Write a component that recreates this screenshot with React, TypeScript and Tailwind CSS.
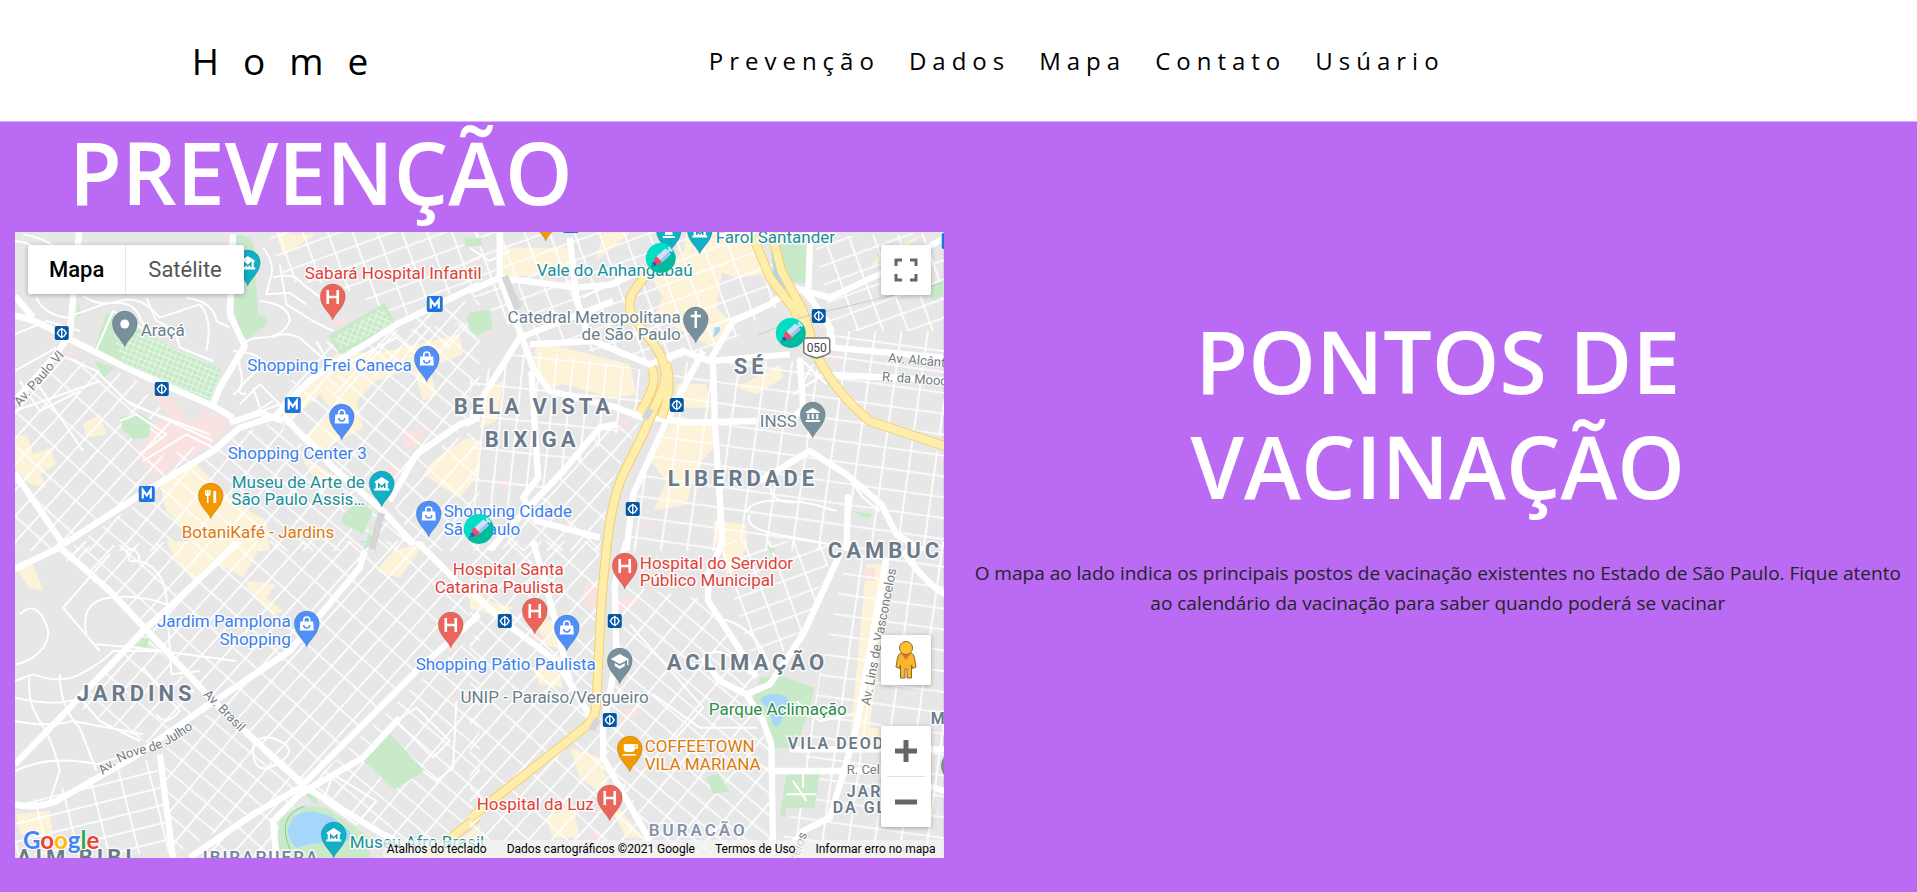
import React from "react";

type Kind = "hospital" | "shop" | "museum" | "food" | "cafe" | "dot" | "church" | "bank" | "school" | "statue";

const pinColors: Record<Kind, string> = {
  hospital: "#ec655b",
  shop: "#4f8ff7",
  museum: "#12b0c6",
  food: "#f29900",
  cafe: "#f29900",
  dot: "#78909c",
  church: "#78909c",
  bank: "#78909c",
  school: "#78909c",
  statue: "#12b0c6",
};

function Glyph({ kind }: { kind: Kind }) {
  switch (kind) {
    case "hospital":
      return <path d="M-5-7V7M5-7V7M-5 0H5" fill="none" stroke="#fff" strokeWidth="2.6" />;
    case "shop":
      return (
        <g>
          <path d="M-3-2V-4a3 3 0 0 1 6 0V-2" fill="none" stroke="#fff" strokeWidth="1.6" />
          <path d="M-6.500-2.500H6.500L7 6.500H-7Z" fill="#fff" />
          <path d="M-3 1a3 3 0 0 0 6 0" fill="none" stroke="#4f8ff7" strokeWidth="1.500" />
        </g>
      );
    case "museum":
      return (
        <g>
          <path d="M-7-2.500L0-7L7-2.500V-1H-7ZM-6-1H6V5H-6ZM-7.500 4.500H7.500V6.500H-7.500Z" fill="#fff" />
          <path d="M-3 4V0L0 3L3 0V4" fill="none" stroke="#12a0b4" strokeWidth="1.500" />
        </g>
      );
    case "food":
      return (
        <g fill="none" stroke="#fff">
          <path d="M-5-6V-2.500Q-5-.5-3-.5Q-1-.5-1-2.500V-6M-3-6V7" strokeWidth="1.600" />
          <path d="M4-5V7" strokeWidth="2.800" />
        </g>
      );
    case "cafe":
      return (
        <g>
          <path d="M-6-5H5V0Q5 3 2 3H-3Q-6 3-6 0ZM-7 5H6V6.800H-7Z" fill="#fff" />
          <path d="M5-4H7.500V-1H5" fill="none" stroke="#fff" strokeWidth="1.300" />
        </g>
      );
    case "dot":
      return <circle r="4.500" fill="#fff" />;
    case "church":
      return <path d="M0-9V8M-5-4H5" stroke="#fff" strokeWidth="2.400" />;
    case "bank":
      return <path d="M-7-3L0-7L7-3V-2H-7ZM-5.500-1H-3.500V4H-5.500ZM-1-1H1V4H-1ZM3.500-1H5.500V4H3.500ZM-7 5H7V7H-7Z" fill="#fff" />;
    case "school":
      return (
        <g fill="#fff">
          <path d="M-9-2L0-7L9-2L0 3ZM-5 2L0 5L5 2V5L0 8L-5 5Z" />
          <path d="M8-2V4" stroke="#fff" strokeWidth="1.300" />
        </g>
      );
    case "statue":
      return <path d="M-2-7H2L4 4H-4ZM-6 5H6V7H-6Z" fill="#fff" />;
  }
}

function Pin({ x, y, kind }: { x: number; y: number; kind: Kind }) {
  return (
    <g transform={`translate(${x} ${y})`}>
      <path
        d="M0 0C-1.600-6-12.500-13-12.500-23.500A12.500 12.500 0 0 1 12.500-23.500C12.500-13 1.600-6 0 0Z"
        fill={pinColors[kind]}
        stroke="#00000022"
        strokeWidth="1"
      />
      <g transform="translate(0 -23)">
        <Glyph kind={kind} />
      </g>
    </g>
  );
}

const pins: [number, number, Kind][] = [
  [248, 285, "museum"],
  [125, 346, "dot"],
  [333, 319, "hospital"],
  [427, 381, "shop"],
  [342, 439, "shop"],
  [382, 506, "museum"],
  [211, 518, "food"],
  [429, 536, "shop"],
  [696, 342, "church"],
  [813, 437, "bank"],
  [700, 253, "museum"],
  [669, 253, "statue"],
  [546, 240, "food"],
  [307, 646, "shop"],
  [451, 647, "hospital"],
  [535, 633, "hospital"],
  [567, 650, "shop"],
  [620, 683, "school"],
  [625, 588, "hospital"],
  [630, 771, "cafe"],
  [610, 820, "hospital"],
  [334, 857, "museum"],
  [954, 788, "dot"],
];

type Place = [string, number, number, string, ("start" | "end")?];
const RED = "#df4238";
const BLUE = "#3b80ef";
const TEAL = "#198f9b";
const ORANGE = "#dd7a0c";
const SLATE = "#687f8c";

const places: Place[] = [
  ["Sabará Hospital Infantil", 305, 278, RED],
  ["Araçá", 141, 335, SLATE],
  ["Shopping Frei Caneca", 412, 370, BLUE, "end"],
  ["Shopping Center 3", 228, 458, BLUE],
  ["Museu de Arte de", 365, 487, TEAL, "end"],
  ["São Paulo Assis…", 365, 504, TEAL, "end"],
  ["BotaniKafé - Jardins", 182, 537, ORANGE],
  ["Shopping Cidade", 444, 516, BLUE],
  ["São Paulo", 444, 534, BLUE],
  ["Vale do Anhangabaú", 537, 275, TEAL],
  ["Farol Santander", 716, 242, TEAL],
  ["Catedral Metropolitana", 681, 322, SLATE, "end"],
  ["de São Paulo", 681, 339, SLATE, "end"],
  ["INSS", 797, 426, SLATE, "end"],
  ["Jardim Pamplona", 291, 626, BLUE, "end"],
  ["Shopping", 291, 644, BLUE, "end"],
  ["Hospital Santa", 564, 574, RED, "end"],
  ["Catarina Paulista", 564, 592, RED, "end"],
  ["Shopping Pátio Paulista", 596, 669, BLUE, "end"],
  ["UNIP - Paraíso/Vergueiro", 649, 702, SLATE, "end"],
  ["Hospital do Servidor", 640, 568, RED],
  ["Público Municipal", 640, 585, RED],
  ["Parque Aclimação", 709, 714, "#2c8c4b"],
  ["COFFEETOWN", 645, 751, ORANGE],
  ["VILA MARIANA", 645, 769, ORANGE],
  ["Hospital da Luz", 594, 809, RED, "end"],
  ["Museu Afro Brasil", 350, 847, TEAL],
];

const districts: [string, number, number][] = [
  ["BELA VISTA", 454, 413],
  ["BIXIGA", 485, 446],
  ["SÉ", 734, 373],
  ["LIBERDADE", 668, 485],
  ["CAMBUC", 828, 557],
  ["ACLIMAÇÃO", 667, 669],
  ["JARDINS", 77, 700],
];

const smallDistricts: [string, number, number][] = [
  ["VILA DEOD", 788, 748],
  ["JAR", 847, 796],
  ["DA GL", 833, 812],
  ["M", 931, 723],
];

const metros: [number, number][] = [
  [435, 303],
  [293, 404],
  [147, 493],
  [571, 224],
  [950, 240],
];
const stations: [number, number][] = [
  [62, 332],
  [162, 388],
  [677, 404],
  [819, 315],
  [633, 508],
  [505, 620],
  [615, 620],
  [610, 719],
];
const clinics: [number, number][] = [
  [661, 257],
  [791, 332],
  [479, 528],
];

/* Street geometry is kept in four tiles, drawn at a third of its own scale. */
type Tile = {
  x: number;
  y: number;
  grids: [string, string][];
  shops: string[];
  green: string[];
  pink: string[];
  water: string[];
  streets: string[];
  avenues: string[];
  highways: string[];
};

const tiles: Tile[] = [
  {
    x: 0,
    y: 220,
    grids: [
      ["url(#gridA)", "M45 520L180 400L400 470L520 600L430 720L680 650L190 960L45 740Z"],
      ["url(#gridB)", "M860 590L1180 330L1440 300V600L1250 700L1130 850Z"],
      ["url(#gridB)", "M830 600L1260 990H200L720 640Z"],
      ["url(#gridC)", "M800 33H1440V190L1200 290L1010 190L860 180Z"],
      ["url(#gridA)", "M45 770L190 990H45Z"],
      ["url(#gridA)", "M1180 850L1250 710L1440 620V990H1260Z"],
      ["url(#gridA)", "M990 350L1440 230V340L900 560L840 520Z"],
    ],
    shops: [
      "M45 650L80 640L100 700L150 680L170 730L120 760L140 800L90 790L45 740Z",
      "M480 790L590 730L700 840L800 900L810 990H600L560 930L500 870Z",
      "M850 540L1010 400L1160 390L1380 340L1390 400L1290 440L1310 520L1270 540L1240 440L1130 480L1070 540L1090 620L960 690L910 650L1000 570L960 520L850 620Z",
      "M830 40H950L900 70L850 105Z",
      "M1300 720L1400 650L1440 660V760L1380 830L1270 760Z",
      "M250 610L300 580L320 640L260 650Z",
      "M900 700L1030 780L960 800Z",
    ],
    green: [
      "M320 275L480 360L665 445L630 540L500 490L370 430L285 385Z",
      "M700 45Q770 30 765 110L775 280Q830 300 780 325L750 355L725 345L705 270Z",
      "M1155 245L1190 315L1020 400L985 345Z",
      "M360 590L420 575L455 600L445 650L400 655L370 630Z",
      "M285 420L345 440L310 470Z",
      "M1030 880L1080 840L1120 870L1090 940L1025 905Z",
      "M1400 290L1440 270V345L1410 325Z",
      "M1395 50H1440V75H1395Z",
      "M235 240L245 280L230 290Z",
      "M1090 985L1110 930L1130 985Z",
    ],
    pink: [
      "M445 500L545 560L560 610L620 570L690 600L640 670L540 720L470 770L410 690L440 660L470 600L520 600Z",
      "M1000 300L1045 285L1040 310L1010 318Z",
      "M1210 630L1280 620L1250 680L1215 680Z",
      "M195 400L225 380L235 395L205 412Z",
      "M1160 740L1185 720L1195 750L1170 765Z",
    ],
    water: [],
    streets: [
      "M45 60Q130 70 140 130T90 220",
      "M70 40Q180 60 200 130L230 200",
      "M110 230Q130 280 200 290L310 250Q400 230 420 290T560 340",
      "M250 225Q300 260 360 240T480 290L600 250Q640 290 620 390",
      "M440 230L470 300Q530 320 540 380L640 420",
      "M560 230Q640 240 650 300L690 320",
      "M780 240Q870 250 870 300Q850 350 780 350T720 440Q740 500 700 520",
      "M820 350Q850 330 900 350L990 430L940 470",
      "M820 170Q880 150 910 190L990 250",
      "M790 80Q830 130 810 180L800 220L870 215L920 250",
      "M200 410L290 450L380 540L640 660",
      "M390 550L630 640",
      "M360 600L410 580L500 640L420 700",
      "M430 720L560 640L660 690",
      "M720 550L780 490L840 550L760 580",
      "M760 500L780 560M740 590L820 540",
      "M840 130L860 250L940 300L1000 330",
      "M45 340L140 300L240 330",
      "M290 385L340 270L440 330",
      "M700 390Q830 400 760 460T740 520",
      "M950 360L1000 450L1190 350",
      "M45 450L170 380M60 480L120 570L240 510M100 470L250 690M45 570L300 480",
    ],
    avenues: [
      "M45 285Q100 290 200 350L400 450L640 555L700 590",
      "M190 970L440 810L640 690L720 620L830 585L860 545L940 470L1190 310L1440 190",
      "M850 585L1000 740L1150 870L1260 990",
      "M45 755L190 970",
      "M238 33L210 340L170 400L45 540",
      "M700 40L690 280L735 375L660 500L640 550",
      "M1440 590L1380 610L1250 700L1170 840",
      "M45 225L100 290",
      "M690 605L780 575L850 600",
    ],
    highways: [],
  },
  {
    x: 470,
    y: 220,
    grids: [
      ["url(#gridC)", "M0 33H860L980 270L900 260L720 420L540 420L180 360L0 220Z"],
      ["url(#gridD)", "M0 480L150 380L540 450L500 590L170 840L0 960Z"],
      ["url(#gridE)", "M600 600H1180L1425 700V990H470L500 800Z"],
      ["url(#gridE)", "M600 420H960L1060 450L1180 600H600Z"],
      ["url(#gridE)", "M1070 330H1425V650L1180 590L1060 450Z"],
      ["url(#gridA)", "M100 950L390 620L510 600L420 800L390 990H100Z"],
      ["url(#gridC)", "M1030 50L1425 33V330H1090Z"],
    ],
    shops: [
      "M550 180L640 90L760 130L740 260L790 310L730 380L640 330L550 290L580 230Z",
      "M100 80H300L320 150L100 170Z",
      "M200 360L480 430L500 520L430 530L280 490L240 500L190 440Z",
      "M620 490H710L720 560H620Z",
      "M600 610L730 610V680L680 740L650 850L550 870L590 780L540 720Z",
      "M800 500L930 430L940 470L860 520Z",
      "M730 900L830 910V990H740Z",
      "M50 500L100 480L80 600L30 620Z",
      "M1200 140L1320 70L1360 40L1230 100Z",
      "M650 33H830L880 160L800 170L640 110Z",
      "M400 35H480L380 120Z",
    ],
    green: [
      "M920 70H1010V190L960 180Z",
      "M0 275L60 265L70 320L20 345L0 330Z",
      "M0 50H35V75H0Z",
      "M1370 200L1425 175V220L1390 240Z",
      "M130 210L160 250L145 260Z",
      "M1150 870L1210 880L1190 895Z",
    ],
    pink: ["M445 595L480 600L475 615L445 608Z", "M1090 400L1115 400L1110 425L1090 420Z", "M90 775L120 780L115 800L90 795Z", "M515 905L545 912L540 925L515 922Z"],
    water: ["M900 45L912 45L922 120L1000 270L990 300L975 275L912 160Z", "M735 320Q760 310 748 335L730 350"],
    streets: [
      "M830 870Q860 820 1030 850L1100 870",
      "M900 780Q900 860 1000 840",
      "M1130 760L1180 830L1230 870",
      "M1000 220L1080 300L960 300",
      "M1000 420L1070 490M990 500L1030 430M970 520L1060 460",
      "M0 80L60 120L120 90",
      "M340 230L430 180L480 150",
      "M840 880Q820 920 920 940L1080 970",
    ],
    avenues: [
      "M90 33V170L190 440L240 510L440 560L520 590",
      "M0 210L90 170L320 200L430 190L500 150",
      "M300 50L320 230L350 330",
      "M0 590L150 350L430 240",
      "M180 370L370 360L540 430L640 390L720 420L960 400",
      "M730 430L735 600L760 990",
      "M500 580L640 605L860 600",
      "M590 600L490 820L470 990",
      "M700 390L620 540L590 600",
      "M720 420L790 300L900 250L970 200L1080 230L1250 150L1425 50",
      "M1022 33L1015 220L1080 320L1090 380L1420 410",
      "M1060 460L1425 478",
      "M440 610L390 620L280 750L100 940L60 990",
      "M185 450L205 770L160 830L200 900L390 950",
      "M870 780L1020 690L1130 760L1235 850L1280 940L1425 1030",
      "M1130 990L1135 820M990 410L1000 560L960 600",
    ],
    highways: [
      "M560 120L500 200Q465 240 490 290L560 380Q600 450 580 500L520 640L465 750Q425 830 410 990",
      "M545 440Q570 480 510 575M590 430Q610 500 575 590",
      "M850 45L900 170L970 260L1060 440",
      "M905 33L935 150L1000 270L1040 400Q1100 520 1200 600L1425 675",
    ],
  },
  {
    x: 0,
    y: 540,
    grids: [
      ["url(#gridA)", "M200 20L560 0H1250L1440 190L900 740L650 500Z"],
      ["url(#gridB)", "M480 640L640 500L900 740L520 940Z"],
      ["url(#gridF)", "M45 800L290 700L470 650L510 940H45Z"],
      ["url(#gridA)", "M550 950L900 740L830 950Z"],
      ["url(#gridB)", "M920 740L1280 400L1440 270V820L1280 940Z"],
      ["url(#gridA)", "M220 490L430 270L620 490L470 620Z"],
    ],
    shops: [
      "M500 0H790L730 110L640 60L590 130L530 60Z",
      "M740 120L830 130L800 170L850 210L820 220L740 140Z",
      "M45 80L100 70L130 150L90 140Z",
      "M1130 90L1180 30L1280 0L1200 110Z",
      "M50 820L150 810L160 890L60 880Z",
      "M1350 920L1440 850V950H1330Z",
    ],
    green: [
      "M1170 578L1275 690L1185 745L1090 660Z",
      "M840 840Q890 780 980 800L1110 890L1110 950H850L830 900Z",
      "M410 315L430 290L450 292L440 320Z",
      "M910 745Q960 770 955 795Q920 775 910 745Z",
      "M1080 0H1100L1090 10Z",
    ],
    pink: ["M1340 310L1370 310L1375 330L1345 332Z"],
    water: ["M880 830Q920 795 1000 830L1050 870Q1060 910 1010 900L930 910L890 920Q860 890 865 860Z"],
    streets: [
      "M60 220Q100 180 130 230T130 320T50 370",
      "M45 420L100 400Q180 430 240 400T340 330L480 330",
      "M90 410Q80 480 120 540T180 690L150 780",
      "M180 400Q180 500 240 560L290 690",
      "M45 470Q180 500 240 470L300 540L420 600",
      "M45 540Q140 560 220 540L430 580",
      "M45 690Q150 640 290 670L450 620",
      "M260 280Q240 180 330 170T500 190",
      "M380 30Q400 15 415 40T390 60L380 30",
      "M420 60Q490 80 500 170L515 400L600 390",
      "M290 310L410 320L710 360",
      "M330 40L190 200L300 330M260 0L200 60",
      "M470 520Q500 560 540 510L430 380",
      "M760 620Q780 570 840 600T830 670T760 620",
      "M1270 690L1310 720L1360 680L1370 480",
      "M1000 700L1130 780L1070 850L970 780Z",
      "M1190 540L1250 500L1350 600L1300 650Z",
    ],
    avenues: [
      "M170 10L330 150L500 330L640 480L820 650L920 740L1150 880L1300 950",
      "M0 105L190 15",
      "M1095 30L1080 80L870 330L600 510L400 650L170 780Q110 805 45 790",
      "M45 670L220 490L430 270L560 150L720 0",
      "M480 640L500 800L520 950",
      "M570 950L760 820L900 740L1050 590L1250 390L1440 220",
      "M830 950L820 840L900 760L1090 650L1200 530",
      "M1250 0L1340 90L1440 190",
    ],
    highways: ["M1280 950L1440 822"],
  },
  {
    x: 470,
    y: 540,
    grids: [
      ["url(#gridA)", "M0 0H390L370 540L0 820Z"],
      ["url(#gridB)", "M450 130L720 180L860 400L820 460L900 620V940H550L400 640Z"],
      ["url(#gridE)", "M1130 50L1425 0V950H920L1000 700L1050 400Z"],
      ["url(#gridA)", "M0 830L380 550L550 900H0Z"],
      ["url(#gridC)", "M740 0H1100L1000 280L860 400Z"],
    ],
    shops: [
      "M0 110L50 180L130 200L90 230L0 200Z",
      "M190 380L260 370L280 440L210 430Z",
      "M300 620L390 650L430 780L520 890L470 890L400 760L330 710Z",
      "M230 830L310 790L330 890L250 890Z",
      "M1190 70L1260 70L1200 560L1280 560L1270 620L1140 610Z",
      "M750 0H820V80L770 100Z",
      "M200 230L300 250L290 330L220 310Z",
    ],
    green: [
      "M850 480L870 410L935 405L1035 440L1020 500L980 620L900 620L890 530Z",
      "M950 700H1050L1035 800L950 800L945 830L930 825Z",
      "M710 710L745 695L780 750L730 760Z",
      "M890 15L920 25L905 40Z",
    ],
    pink: [
      "M440 170L510 175L470 220L430 200Z",
      "M345 120L380 130V210L345 180Z",
      "M170 250L230 290L200 305Z",
      "M470 500L515 510L500 530L475 530Z",
      "M1185 85L1215 80L1215 120L1180 118Z",
      "M360 870L385 868L385 890H362Z",
    ],
    water: ["M870 480Q880 455 930 460Q970 470 950 505L930 550Q910 570 905 530L895 500Z"],
    streets: [
      "M480 250L700 500L620 590",
      "M700 350Q760 300 840 400",
      "M740 230Q860 250 900 380",
      "M550 460L690 560L860 560",
      "M980 480L1050 540L1150 520",
      "M970 720L1010 780M950 760H1040M1000 700V740",
    ],
    avenues: [
      "M470 0L435 130L440 350L400 560L400 650L540 900",
      "M0 150L100 240L260 360L370 540",
      "M190 0L260 250L300 420",
      "M1110 40L1000 280L900 430L830 460L750 420L700 350",
      "M760 0L715 100V180L800 310L860 410",
      "M1250 50L1160 560L1120 700L1080 830L1000 870L940 950",
      "M830 460L880 540L905 610L910 940",
      "M910 690H1230M960 625H1425",
      "M1300 30Q1360 120 1425 160",
      "M1230 690L1425 750",
    ],
    highways: ["M412 0L395 180L380 480Q380 530 350 555L0 832"],
  },
];

function Streets({ tile, id }: { tile: Tile; id: string }) {
  return (
    <g transform={`translate(${tile.x} ${tile.y}) scale(.33333)`} strokeLinejoin="round" fill="none">
      <clipPath id={id}>
        <path d="M0 0H1440V990H0Z" />
      </clipPath>
      <g clipPath={`url(#${id})`}>
        <path d={tile.shops.join("")} fill="#fdf3d8" />
        <path d={tile.pink.join("")} fill="#fae2e1" />
        {tile.grids.map(([fill, d]) => (
          <path key={d} d={d} fill={fill} />
        ))}
        <path d={tile.green.join("")} fill="#c8eac9" />
        <path d={tile.water.join("")} fill="#a6d7fb" />
        <path d={tile.streets.join("")} stroke="#fff" strokeWidth="6" />
        <path d={tile.avenues.join("")} stroke="#fff" strokeWidth="19" />
        <path d={tile.highways.join("")} stroke="#f3cf72" strokeWidth="29" />
        <path d={tile.highways.join("")} stroke="#ffeeab" strokeWidth="23" />
      </g>
    </g>
  );
}

const gridPatterns: [string, number, number, number][] = [
  ["gridA", 52, 78, 42],
  ["gridB", 70, 50, 40],
  ["gridC", 70, 54, -20],
  ["gridD", 50, 96, 6],
  ["gridE", 78, 62, 8],
  ["gridF", 88, 52, -14],
];

function MapDrawing() {
  return (
    <svg
      viewBox="15 231 929 626"
      preserveAspectRatio="xMidYMid slice"
      className="block size-full"
      role="img"
      aria-label="Mapa dos postos de vacinação"
    >
      <defs>
        {gridPatterns.map(([id, w, h, angle]) => (
          <pattern key={id} id={id} width={w} height={h} patternUnits="userSpaceOnUse" patternTransform={`rotate(${angle})`}>
            <path d={`M0 3H${w}M3 0V${h}`} stroke="#fff" strokeWidth="5" />
          </pattern>
        ))}
        <pattern id="plots" width="16" height="16" patternUnits="userSpaceOnUse" patternTransform="rotate(22)">
          <path d="M0 0H16M0 0V16" stroke="#e9f8e9" strokeWidth="5" />
        </pattern>
        <linearGradient id="clinic" x1="0" y1="0" x2="1" y2="1">
          <stop offset=".5" stopColor="#00dfc3" />
          <stop offset=".5" stopColor="#00bb9e" />
        </linearGradient>
        <path id="nove" d="M103 774Q122 757 143 753T194 727" />
      </defs>
      <rect x="15" y="231" width="929" height="626" fill="#e7e7e7" />
      {tiles.map((tile, i) => (
        <Streets key={i} tile={tile} id={`tile${i}`} />
      ))}
      <g transform="translate(0 220) scale(.33333)">
        <path d="M330 300L480 360L665 445L630 540L500 490L370 430Z M1145 260L1180 310L1025 385L1000 350Z" fill="url(#plots)" />
      </g>
      <path d="M372 548L382 512M645 418L651 408M505 275L518 308M592 729L598 718" stroke="#d6d6d6" strokeWidth="7" fill="none" />
      <path d="M758 334L803 316L944 282" stroke="#c9ccd0" strokeWidth="1" fill="none" />
      <path d="M305 805Q275 815 291 850" stroke="#81cb98" strokeWidth="1" fill="none" />

      {metros.map(([x, y]) => (
        <g key={`${x}-${y}`} transform={`translate(${x} ${y})`}>
          <rect x="-8" y="-8" width="16" height="16" rx="2" fill="#1b74e4" />
          <path d="M-4 4.500V-4L0 1.500L4-4V4.500" fill="none" stroke="#fff" strokeWidth="2.200" />
        </g>
      ))}
      {stations.map(([x, y]) => (
        <g key={`${x}-${y}`} transform={`translate(${x} ${y})`}>
          <rect x="-7" y="-7" width="14" height="14" rx="2" fill="#0357a4" />
          <path d="M-2-3.500L-4.500 0L-2 3.500M2-3.500L4.500 0L2 3.500" fill="none" stroke="#fff" strokeWidth="1.300" />
          <path d="M0-3V3" stroke="#fff" strokeWidth="1.400" />
          <path d="M-2.500-3L0-5.500L2.500-3ZM-2.500 3L0 5.500L2.500 3Z" fill="#fff" />
        </g>
      ))}

      <g
        fontFamily="Roboto, sans-serif"
        stroke="#fff"
        strokeOpacity=".85"
        strokeWidth="3"
        strokeLinejoin="round"
        paintOrder="stroke"
      >
        <g fill="#6b7a8a" fontWeight="700" fontSize="22" className="tracking-[4px]">
          {districts.map(([t, x, y]) => (
            <text key={t} x={x} y={y}>{t}</text>
          ))}
          <text x="17" y="864">AIM BIBI</text>
        </g>
        <g fill="#6b7a8a" fontWeight="600" fontSize="16" className="tracking-[2px]">
          {smallDistricts.map(([t, x, y]) => (
            <text key={t} x={x} y={y}>{t}</text>
          ))}
        </g>
        <g fill="#8493a8" fontWeight="600" fontSize="17" className="tracking-[3px]">
          <text x="649" y="835">BURACÃO</text>
          <text x="203" y="862" fill="#75859a" className="tracking-[2px]">IBIRAPUERA</text>
        </g>
        <g fill="#727b84" fontSize="13" strokeWidth="2">
          <text transform="translate(888 361) rotate(5)">Av. Alcânt</text>
          <text transform="translate(882 380) rotate(4)">R. da Mooc</text>
          <text transform="translate(847 773)">R. Cel.</text>
          <text transform="translate(203 694) rotate(45)">Av. Brasil</text>
          <text transform="translate(20 406) rotate(-49)">Av. Paulo VI</text>
          <text transform="translate(870 705) rotate(-79)">Av. Lins de Vasconcelos</text>
          <text transform="translate(797 862) rotate(-70)">celos</text>
          <text><textPath href="#nove">Av. Nove de Julho</textPath></text>
        </g>
      </g>

      {pins.map(([x, y, kind]) => (
        <Pin key={`${x}-${y}`} x={x} y={y} kind={kind} />
      ))}

      <g
        fontFamily="Roboto, sans-serif"
        fontSize="17"
        stroke="#fff"
        strokeOpacity=".9"
        strokeWidth="3"
        strokeLinejoin="round"
        paintOrder="stroke"
      >
        {places.map(([t, x, y, fill, anchor]) => (
          <text key={t} x={x} y={y} fill={fill} textAnchor={anchor ?? "start"}>{t}</text>
        ))}
      </g>

      <path d="M806 337H828Q830 337 830 340V351Q829 354 817 357Q805 354 804 351V340Q804 337 806 337Z" fill="#fff" stroke="#777" strokeWidth="1.500" />
      <text x="817" y="351" fontFamily="Roboto, sans-serif" fontSize="12" fill="#444" textAnchor="middle">050</text>

      {clinics.map(([x, y]) => (
        <g key={`${x}-${y}`} transform={`translate(${x} ${y})`}>
          <circle r="15" fill="url(#clinic)" />
          <g transform="rotate(48)">
            <path d="M0-13V-8M-3-13H3" stroke="#d6e6ff" strokeWidth="2" />
            <rect x="-4" y="-10" width="8" height="13" rx="1" fill="#cfe0fb" />
            <rect x="1" y="-10" width="3" height="13" fill="#a2c1f0" />
            <path d="M-4 2H4V5L2 7H-2L-4 5Z" fill="#f34a68" />
            <path d="M-2 7H2V10H-2Z" fill="#5145a8" />
            <path d="M0 10V13" stroke="#5145a8" strokeWidth="1" />
          </g>
        </g>
      ))}
    </svg>
  );
}

function Pegman() {
  return (
    <svg viewBox="0 0 24 40" className="h-10 w-6" aria-hidden="true">
      <path d="M7 13H17Q20 14 20.500 18L22 27L18.500 28.500L17.500 25V38H13V29H11V38H6.500V25L5.500 28.500L2 27L3.500 18Q4 14 7 13Z" fill="#fbb52a" stroke="#8a6a34" strokeWidth="1" />
      <path d="M7.500 14H16.500L12 20Z" fill="#e0762a" />
      <circle cx="12" cy="8" r="6.500" fill="#fdc02f" stroke="#8a6a34" strokeWidth="1" />
    </svg>
  );
}

const control = "absolute flex items-center justify-center rounded-xs bg-white shadow-[0_1px_5px_rgba(0,0,0,0.3)]";

function VaccinationMap() {
  return (
    <div className="relative h-[626px] overflow-hidden font-[Roboto,sans-serif]">
      <MapDrawing />

      <div className="absolute top-[13px] left-[13px] flex h-[49px] rounded-xs bg-white text-[22px] shadow-[0_1px_5px_rgba(0,0,0,0.3)]">
        <button type="button" className="border-r border-[#e6e6e6] px-[21px] font-medium text-black">Mapa</button>
        <button type="button" className="px-[22px] text-[#565656]">Satélite</button>
      </div>

      <button type="button" aria-label="Tela cheia" className={`${control} top-[13px] right-[13px] size-[50px]`}>
        <svg viewBox="0 0 24 24" className="size-6" fill="none" stroke="#666" strokeWidth="3" aria-hidden="true">
          <path d="M2 8V2H8M16 2H22V8M22 16V22H16M8 22H2V16" />
        </svg>
      </button>
      <button type="button" aria-label="Street View" className={`${control} right-[13px] bottom-[173px] size-[50px]`}>
        <Pegman />
      </button>
      <div className={`${control} right-[13px] bottom-[31px] w-[50px] flex-col`}>
        <button type="button" aria-label="Aumentar o zoom" className="flex h-[50px] w-full items-center justify-center">
          <svg viewBox="0 0 24 24" className="size-6" stroke="#666" strokeWidth="5" aria-hidden="true">
            <path d="M12 1V23M1 12H23" />
          </svg>
        </button>
        <div className="h-px w-[38px] bg-[#e0e0e0]" />
        <button type="button" aria-label="Diminuir o zoom" className="flex h-[50px] w-full items-center justify-center">
          <svg viewBox="0 0 24 24" className="size-6" stroke="#666" strokeWidth="5" aria-hidden="true">
            <path d="M1 12H23" />
          </svg>
        </button>
      </div>

      <a
        href="#google"
        aria-label="Google"
        className="absolute bottom-0 left-2 font-[Lato,sans-serif] text-[24px] leading-9 font-bold [paint-order:stroke] [-webkit-text-stroke:2px_#fff]"
      >
        <span className="text-[#4285f4]">G</span>
        <span className="text-[#ea4335]">o</span>
        <span className="text-[#fbbc05]">o</span>
        <span className="text-[#4285f4]">g</span>
        <span className="text-[#34a853]">l</span>
        <span className="text-[#ea4335]">e</span>
      </a>
      <div className="absolute right-0 bottom-0 flex h-[18px] items-center gap-5 bg-[#f5f5f5]/70 pr-2 pl-1 text-[12px] leading-[18px] text-black">
        <button type="button">Atalhos do teclado</button>
        <span>Dados cartográficos ©2021 Google</span>
        <a href="#termos">Termos de Uso</a>
        <a href="#erro">Informar erro no mapa</a>
      </div>
    </div>
  );
}

const links = ["Prevenção", "Dados", "Mapa", "Contato", "Usúario"];

export default function App() {
  return (
    <div className="min-h-screen bg-[#bb6af3] font-['Open_Sans','Noto_Sans',sans-serif]">
      <header className="flex h-[122px] items-center border-b border-[#d9b3f5] bg-white pl-[10%] text-black">
        <a href="#home" className="w-[517px] shrink-0 text-[37px] tracking-[24px]">Home</a>
        <nav className="flex gap-[29px] text-[24px] tracking-[6px]">
          {links.map((link) => (
            <a key={link} href={`#${link.toLowerCase()}`}>{link}</a>
          ))}
        </nav>
      </header>
      <main>
        <h2 className="h-[110px] pl-[69px] text-[86px] leading-[100px] font-semibold text-white">PREVENÇÃO</h2>
        <section className="grid grid-cols-2 pb-[34px]">
          <div className="px-[15px]">
            <VaccinationMap />
          </div>
          <div className="px-[10px] pt-[76px] text-center">
            <h1 className="text-[86px] leading-[105px] font-semibold text-white">PONTOS DE VACINAÇÃO</h1>
            <p className="mt-10 text-[19px] leading-[30px] text-[#212529]">
              O mapa ao lado indica os principais postos de vacinação existentes no Estado de São Paulo. Fique atento ao
              calendário da vacinação para saber quando poderá se vacinar
            </p>
          </div>
        </section>
      </main>
    </div>
  );
}
